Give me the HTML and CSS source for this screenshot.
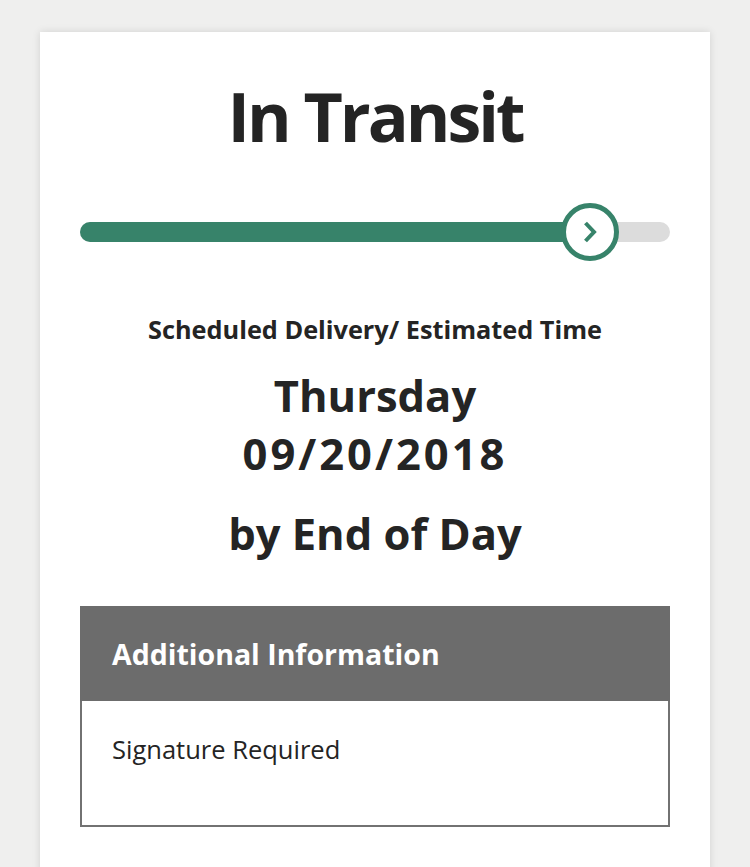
FILE: index.html
```html
<!DOCTYPE html>
<html lang="en">
<head>
    <meta charset="UTF-8">
    <meta name="viewport" content="width=device-width, initial-scale=1.0">
    <title>Tracking Status</title>
    <link rel="stylesheet" href="styles.css">
</head>
<body>
    <div class="card">
        <h1 class="status">In Transit</h1>
        <div class="progress">
            <div class="progress-fill"></div>
            <div class="progress-marker">
                <svg width="16" height="24" viewBox="0 0 16 24">
                    <path d="M3.5 3 L12 12 L3.5 21" fill="none" stroke="#37836a" stroke-width="4"/>
                </svg>
            </div>
        </div>
        <div class="delivery">
            <div class="delivery-label">Scheduled Delivery/ Estimated Time</div>
            <div class="delivery-date">
                <div>Thursday</div>
                <div class="date-digits">09/20/2018</div>
            </div>
            <div class="delivery-time">by End of Day</div>
        </div>
        <div class="info">
            <div class="info-header">Additional Information</div>
            <div class="info-body">Signature Required</div>
        </div>
    </div>
</body>
</html>
```

FILE: styles.css
```css
html, body {
    margin: 0;
    padding: 0;
}
body {
    background-color: #efefee;
    font-family: "Open Sans", Lato, sans-serif;
    color: #242424;
    padding: 32px 40px 0;
    height: 867px;
    box-sizing: border-box;
    overflow: hidden;
}
.card {
    background-color: #fff;
    box-shadow: 0 0 8px rgba(0, 0, 0, 0.12);
    padding: 42px 40px 60px;
    min-height: 900px;
    box-sizing: border-box;
}
.status {
    margin: 0;
    text-align: center;
    font-size: 68px;
    font-weight: 700;
    line-height: 84px;
    letter-spacing: -3px;
}
.progress {
    position: relative;
    height: 20px;
    margin-top: 64px;
    border-radius: 10px;
    background-color: #dcdcdc;
}
.progress-fill {
    width: 85%;
    height: 100%;
    border-radius: 10px 0 0 10px;
    background-color: #37836a;
}
.progress-marker {
    position: absolute;
    left: 481px;
    top: -19px;
    width: 48px;
    height: 48px;
    border: 5px solid #37836a;
    border-radius: 50%;
    background-color: #fff;
    display: flex;
    justify-content: center;
    align-items: center;
}
.delivery {
    text-align: center;
    margin-top: 72px;
}
.delivery-label {
    font-size: 25.3px;
    font-weight: 700;
    line-height: 30px;
}
.delivery-date {
    font-size: 43.5px;
    font-weight: 700;
    line-height: 58px;
    margin-top: 23px;
}
.date-digits {
    letter-spacing: 3px;
}
.delivery-time {
    font-size: 43.5px;
    font-weight: 700;
    line-height: 58px;
    margin-top: 22px;
}
.info {
    margin-top: 43px;
}
.info-header {
    background-color: #6c6c6c;
    color: #fff;
    font-size: 28.5px;
    font-weight: 700;
    height: 95px;
    display: flex;
    align-items: center;
    padding: 0 32px;
}
.info-body {
    border: 2px solid #727272;
    border-top: none;
    height: 126px;
    box-sizing: border-box;
    padding: 33px 30px 0;
    font-size: 25.5px;
    line-height: 30px;
}
```
